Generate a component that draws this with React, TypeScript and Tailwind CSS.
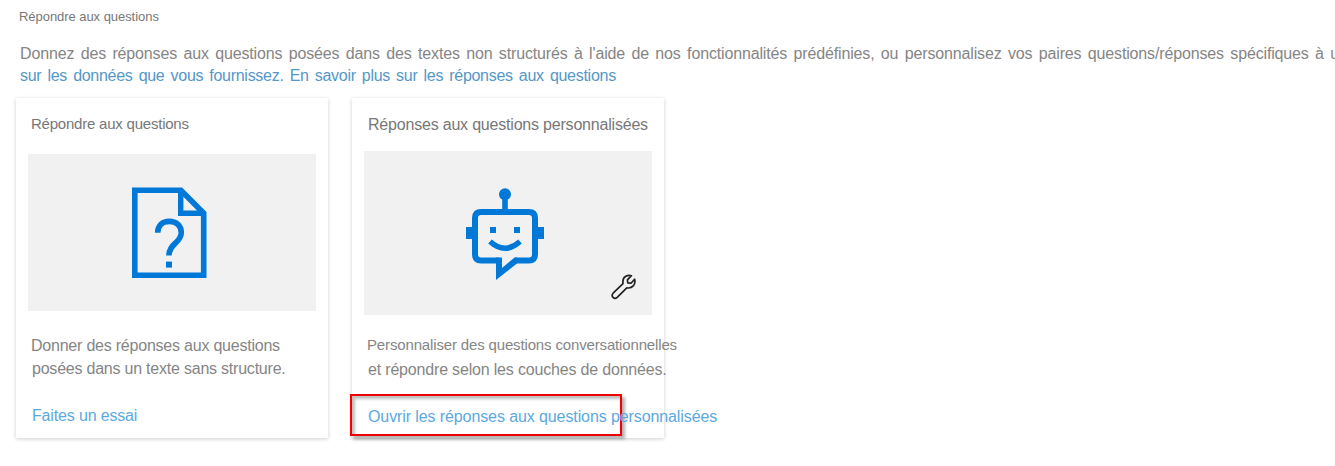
import React from "react";

function DocumentIcon() {
  return (
    <svg width="76" height="92" viewBox="0 0 76 92" fill="none" stroke="#0078d7">
      <path d="M2.8 3.3H48.9L71.7 26.2V88.2H2.8Z" strokeWidth="5.6" />
      <path d="M48.7 3V26.2H72" strokeWidth="5.4" />
      <path d="M25.7 45.8C25.7 38.5 30.5 34.4 37.2 34.4C44.3 34.4 49.3 38.8 49.3 45.5C49.3 56 36.9 56.5 36.9 68.5" strokeWidth="5.6" />
      <path d="M34 74.6h6v6h-6z" fill="#0078d7" stroke="none" />
    </svg>
  );
}

function BotIcon() {
  return (
    <svg width="78" height="92" viewBox="0 0 78 92" fill="none" stroke="#0078d7">
      <circle cx="39" cy="6.2" r="6" fill="#0078d7" stroke="none" />
      <path d="M39 8V24" strokeWidth="5.6" />
      <path
        d="M49 72.5H63Q69 72.5 69 66.5V30Q69 24 63 24H15Q9 24 9 30V66.5Q9 72.5 15 72.5H33"
        strokeWidth="6"
      />
      <path d="M30 69.5H36V80L48.5 69.5H51V75.5L30 92Z" fill="#0078d7" stroke="none" />
      <path d="M0 39h7v12h-7zM71 39h7v12h-7zM24 39h6v6h-6zM48 39h6v6h-6z" fill="#0078d7" stroke="none" />
      <path d="M24 53.5Q39 67 54 53.5" strokeWidth="5.4" />
    </svg>
  );
}

function WrenchIcon() {
  return (
    <svg width="26" height="26" viewBox="0 0 26 26" fill="none" stroke="#222" strokeWidth="1.7" strokeLinejoin="round">
      <path d="M20.4 1.7C16.8.4 12 2.5 11.9 7.2L12 9.6L2.1 19.2C-.5 22.2 3.2 25.9 6.2 23.3L15.8 13.8C21.2 15 25 10.4 23.6 5.2L20 9.2L16.8 8.8L16.4 5.9Z" />
    </svg>
  );
}

export default function App() {
  return (
    <main className="h-[466px] w-full overflow-hidden bg-white pt-[7px] font-['Liberation_Sans',sans-serif] text-[#858585] whitespace-nowrap">
      <h1 className="ml-[19px] h-5 text-[13px] leading-5 tracking-[-0.05px] text-[#777]">Répondre aux questions</h1>
      <div className="mt-4 ml-5 text-[16px] leading-[22px]">
        <p className="tracking-[-0.15px] [word-spacing:2.1px]">
          Donnez des réponses aux questions posées dans des textes non structurés à l'aide de nos fonctionnalités prédéfinies, ou personnalisez vos paires questions/réponses spécifiques à un
        </p>
        <p className="tracking-[-0.28px] text-[#5597c8] [word-spacing:1.9px]">
          sur les données que vous fournissez. En savoir plus sur les réponses aux questions
        </p>
      </div>
      <div className="mt-[11px] ml-4 flex gap-6">
        <section className="h-[340px] w-[312px] bg-white px-3 pt-[15px] shadow-[0_1px_4px_rgba(0,0,0,0.2)]">
          <h2 className="ml-[3px] h-[22px] text-[15px] leading-[22px] tracking-[-0.22px] text-[#777]">Répondre aux questions</h2>
          <div className="mt-[19px] flex h-[157px] w-[288px] items-center justify-center bg-[#f1f1f1] pr-[4px]">
            <DocumentIcon />
          </div>
          <p className="mt-[23px] ml-[3px] text-[16px] leading-[23px] tracking-[-0.22px]">
            <span className="block">Donner des réponses aux questions</span>
            <span className="ml-px block">posées dans un texte sans structure.</span>
          </p>
          <a className="mt-6 ml-1 block text-[16px] leading-[23px] tracking-[-0.16px] text-[#5ba9df]">Faites un essai</a>
        </section>
        <section className="h-[340px] w-[312px] bg-white px-3 pt-4 shadow-[0_1px_4px_rgba(0,0,0,0.2)]">
          <h2 className="ml-1 h-[22px] text-[16px] leading-[22px] tracking-[-0.2px] text-[#777]">Réponses aux questions personnalisées</h2>
          <div className="relative mt-[15px] flex h-[164px] w-[288px] items-center justify-center bg-[#f1f1f1] pt-[2px] pr-[6px]">
            <BotIcon />
            <span className="absolute top-[123px] left-[247px]">
              <WrenchIcon />
            </span>
          </div>
          <p className="mt-[18px] ml-[3px]">
            <span className="block text-[15px] leading-6 tracking-[-0.15px]">Personnaliser des questions conversationnelles</span>
            <span className="ml-px block text-[16px] leading-[26px] tracking-[-0.18px]">et répondre selon les couches de données.</span>
          </p>
          <div className="mt-[11px] -ml-[14px] h-[42px] w-[272px] border-2 border-[#f00000] pt-[9px] pl-4 shadow-[3px_3px_3px_rgba(0,0,0,0.3),inset_3px_3px_3px_rgba(0,0,0,0.25)]">
            <a className="block text-[16px] leading-[23px] tracking-[-0.1px] text-[#5ba9df]">Ouvrir les réponses aux questions personnalisées</a>
          </div>
        </section>
      </div>
    </main>
  );
}
